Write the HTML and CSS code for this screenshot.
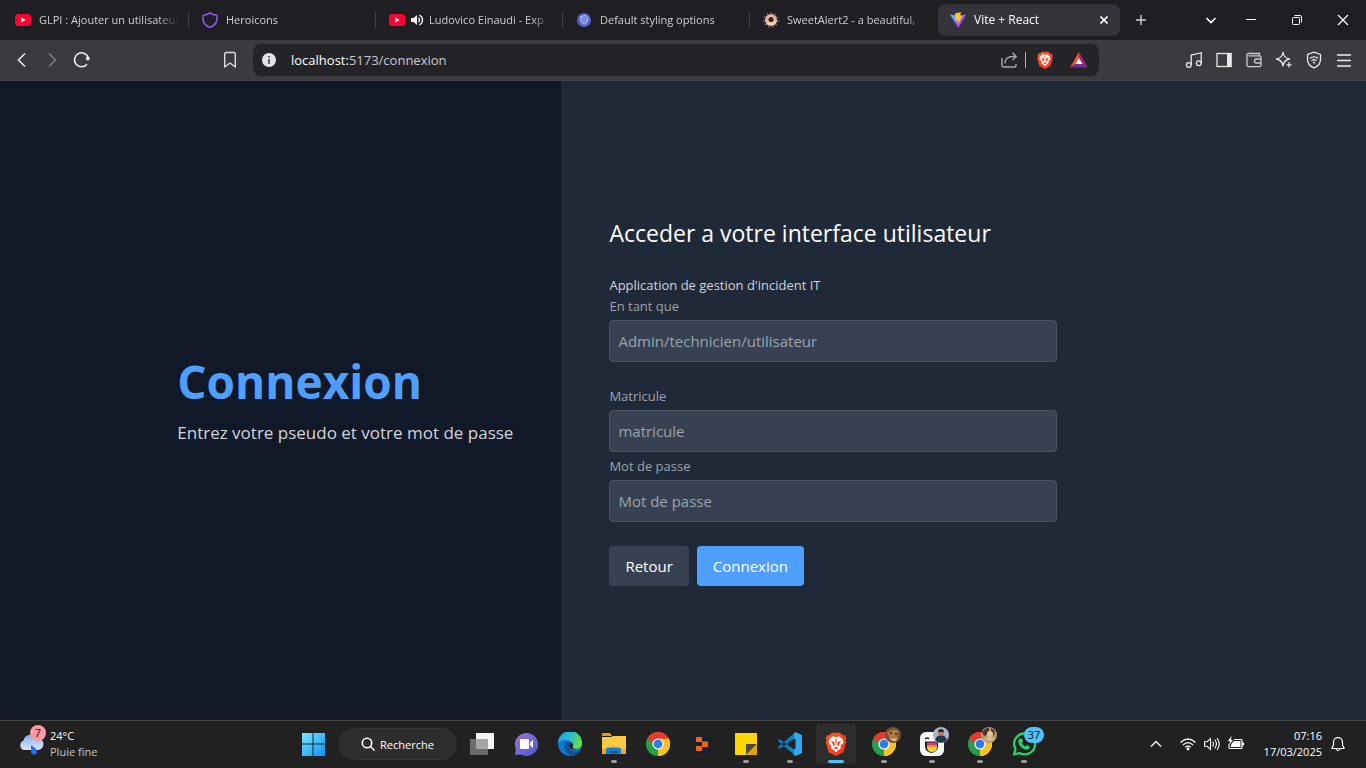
FILE: index.html
```html
<!DOCTYPE html>
<html lang="fr">
<head>
<meta charset="utf-8">
<title>Vite + React</title>
<link rel="stylesheet" href="styles.css">
</head>
<body>
<svg class="defs" width="0" height="0" aria-hidden="true">
  <linearGradient id="g-brave" x1="0" y1="0" x2="1" y2="1"><stop offset="0" stop-color="#ff5a1f"/><stop offset="1" stop-color="#f1331f"/></linearGradient>
  <symbol id="i-youtube" viewBox="0 0 16 16"><rect y="2" width="16" height="12" rx="3" fill="#ff0033"/><path d="M6.3 5.5v5l4.4-2.500z" fill="#fff"/></symbol>
  <symbol id="i-lion" viewBox="0 0 24 28">
    <path d="M7 1h10l2.500 2.800 2.300-.3L24 7l-.9 2.500.8 2.500-3.300 11.500L12 28l-8.600-4.500L.1 12l.8-2.500L0 7l2.200-3.500 2.300.3z" fill="url(#g-brave)"/>
    <path d="M8 5l4 1 4-1 3.500 3.500 1.200 3.700-3.500 4 .6 2.500-2.600 2L12 23.500l-3.200-2.800-2.600-2 .6-2.500-3.500-4 1.200-3.700z" fill="#fff"/>
    <path d="M6 10.500l4 1.100.6 3.700-1.700 1.500-.5-2.600zM18 10.500l-4 1.100-.6 3.700 1.700 1.500.5-2.600zM9 18.500l3-1 3 1-3 2zM11.300 8h1.400l-.2 7h-1z" fill="#f5401f"/>
  </symbol>
  <symbol id="i-chrome" viewBox="0 0 24 24">
    <path d="M12 12L1.600 6A12 12 0 0 1 22.400 6z" fill="#e33b2e"/>
    <path d="M12 12L22.400 6A12 12 0 0 1 12 24z" fill="#fcc31e"/>
    <path d="M12 12v12A12 12 0 0 1 1.600 6z" fill="#269f4b"/>
    <path d="M12 6.500h10.700A12 12 0 0 1 12 24l4.800-9.200z" fill="#fcc31e"/>
    <path d="M7.200 14.800L1.600 6 12 6.500z" fill="#269f4b"/>
    <path d="M1.600 6A12 12 0 0 1 22.700 6.500H12a5.500 5.500 0 0 0-5 3.200L6 12z" fill="#e33b2e"/>
    <circle cx="12" cy="12" r="5.600" fill="#fff"/><circle cx="12" cy="12" r="4.400" fill="#2f7de9"/>
  </symbol>
</svg>

<header class="browser">
  <div class="tabstrip">
    <nav class="tabs" aria-label="Onglets">
      <a class="tab" href="#"><svg class="icon16"><use href="#i-youtube"/></svg><span class="tab-title">GLPI : Ajouter un utilisateur</span></a>
      <a class="tab" href="#"><svg class="icon16" viewBox="0 0 16 16" fill="none" stroke="#8b5cf6" stroke-width="1.500" stroke-linejoin="round"><path d="M8 .9C6 2.600 3.700 3.200 1.300 3.200.1 9 2.400 13.400 8 15.200c5.600-1.800 7.900-6.200 6.700-12C12.300 3.200 10 2.600 8 .9z"/></svg><span class="tab-title">Heroicons</span></a>
      <a class="tab" href="#"><svg class="icon16"><use href="#i-youtube"/></svg><svg class="sound" viewBox="0 0 14 14" fill="none" stroke="#eee" stroke-width="1.400"><path d="M1 5v4h2.500L7 12V2L3.500 5z" fill="#eee" stroke="none"/><path d="M8.500 4.700a3.200 3.200 0 0 1 0 4.600M9.300 2.200a5.200 5.200 0 0 1 0 9.600"/></svg><span class="tab-title">Ludovico Einaudi - Exp</span></a>
      <a class="tab" href="#"><svg class="icon16" viewBox="0 0 16 16"><circle cx="8" cy="8" r="7" fill="#5364cf"/><path d="M4.500 4.500l5-1.300 2.600 2.700-.8 4.200-3 2.200-3.200-2.400z" fill="#7b8be2" stroke="#b9c1f3" stroke-width="1"/></svg><span class="tab-title">Default styling options</span></a>
      <a class="tab" href="#"><svg class="icon16" viewBox="0 0 16 16"><circle cx="8" cy="8" r="7" fill="none" stroke="#675767" stroke-width="1.800" stroke-dasharray="2 2"/><circle cx="8" cy="8" r="6" fill="#e8b69b"/><path d="M3 10a6 6 0 0 0 11-1L9 11z" fill="#f2d5a7"/><circle cx="8" cy="7.500" r="2.500" fill="#29232b"/></svg><span class="tab-title">SweetAlert2 - a beautiful,</span></a>
      <a class="tab tab-active" href="#" aria-current="page"><svg class="icon16" viewBox="0 0 16 16"><defs><linearGradient id="g-vite" x1="0" y1="0" x2="1" y2="1"><stop offset="0" stop-color="#41c8ff"/><stop offset=".7" stop-color="#b13cff"/></linearGradient></defs><path d="M0 2.500l8 1.300 8-1.300L8.300 16z" fill="url(#g-vite)"/><path d="M5.200 1.300L11 .2 10.200 4l2.300-.3L8 12.500l.4-4.200-3.100.5z" fill="#ffc928"/></svg><span class="tab-title">Vite + React</span><svg class="close" viewBox="0 0 8 8" stroke="#fff" stroke-width="1.600"><path d="M.5.5l7 7M7.500.5l-7 7"/></svg></a>
    </nav>
    <button class="newtab" aria-label="Nouvel onglet"><svg class="icon16" viewBox="0 0 16 16" stroke="#d0d0d0" stroke-width="1.400"><path d="M8 3v10M3 8h10"/></svg></button>
    <div class="window-actions">
      <button class="tab-search" aria-label="Rechercher"><svg class="icon16" viewBox="0 0 16 16" fill="none" stroke="#fff" stroke-width="1.700"><path d="M3.500 6L8 10.500 12.500 6"/></svg></button>
      <button aria-label="Réduire"><svg class="icon16" viewBox="0 0 16 16" stroke="#fff"><path d="M3 7.500h10"/></svg></button>
      <button aria-label="Restaurer"><svg class="icon16" viewBox="0 0 16 16" fill="none" stroke="#fff"><rect x="3.500" y="5.500" width="7" height="7" rx="1"/><path d="M5.500 3.500H11A1.500 1.500 0 0 1 12.500 5v5.500"/></svg></button>
      <button aria-label="Fermer"><svg class="icon16" viewBox="0 0 16 16" stroke="#fff" stroke-width="1.200"><path d="M3 3l10 10M13 3L3 13"/></svg></button>
    </div>
  </div>

  <div class="toolbar">
    <button aria-label="Précédent"><svg class="icon20" viewBox="0 0 20 20" fill="none" stroke="#eee" stroke-width="1.500"><path d="M13 3.500L6.500 10l6.500 6.500"/></svg></button>
    <button aria-label="Suivant"><svg class="icon20" viewBox="0 0 20 20" fill="none" stroke="#7d7d82" stroke-width="1.500"><path d="M7 3.500l6.500 6.500L7 16.500"/></svg></button>
    <button aria-label="Actualiser"><svg class="icon20" viewBox="0 0 20 20" fill="none" stroke="#eee" stroke-width="1.600"><path d="M15 14.200A7 7 0 1 1 16.300 8"/><circle cx="15.800" cy="8.500" r="1.900" fill="#eee" stroke="none"/></svg></button>
    <button class="bookmark" aria-label="Favori"><svg class="icon20" viewBox="0 0 20 20" fill="none" stroke="#ddd" stroke-width="1.400" stroke-linejoin="round"><path d="M4.700 4a1.500 1.500 0 0 1 1.500-1.500h7.600A1.500 1.500 0 0 1 15.300 4v13L10 13l-5.300 4z"/></svg></button>
    <div class="address">
      <svg class="icon16" viewBox="0 0 16 16"><circle cx="8" cy="8" r="7" fill="#e4e3e8"/><path d="M8 7v5M8 4v1.800" stroke="#55545a" stroke-width="1.800"/></svg>
      <span class="url"><b>localhost:</b>5173/connexion</span>
      <svg class="icon18" viewBox="0 0 18 18" fill="none" stroke="#aaa" stroke-width="1.400"><path d="M2 7v7.500A1.500 1.500 0 0 0 3.500 16h11a1.500 1.500 0 0 0 1.500-1.500V13M5 12.500c0-4.500 3-7 8-7h3M12.500 1.800L16.200 5.500l-3.700 3.700"/></svg>
      <span class="divider"></span>
      <svg class="icon18 shield"><use href="#i-lion"/></svg>
      <svg class="icon18 bat" viewBox="0 0 18 18"><path d="M9 1L0 16.500l9-6z" fill="#ff5427"/><path d="M9 1l9 15.500-9-6z" fill="#9e2476"/><path d="M0 16.500h18l-9-6z" fill="#6b3195"/><path d="M9 7l3.500 6h-7z" fill="#fff"/></svg>
    </div>
    <div class="extensions">
      <button aria-label="Musique"><svg class="icon18" viewBox="0 0 18 18" fill="none" stroke="#e8e8e8" stroke-width="1.300"><circle cx="3.800" cy="14" r="2.400"/><circle cx="13.800" cy="12.200" r="2.400"/><path d="M6.200 14V4l10-2.300v10.500"/></svg></button>
      <button aria-label="Panneau latéral"><svg class="icon18" viewBox="0 0 18 18" fill="none" stroke="#e8e8e8" stroke-width="1.300"><rect x="2" y="2.500" width="14" height="13"/><path d="M12 2h4.500v14H12z" fill="#e8e8e8" stroke="none"/></svg></button>
      <button aria-label="Portefeuille"><svg class="icon18" viewBox="0 0 18 18" fill="none" stroke="#ccc" stroke-width="1.300"><path d="M2 4v10a1.700 1.700 0 0 0 1.700 1.700h10.600A1.700 1.700 0 0 0 16 14V6.200A1.700 1.700 0 0 0 14.300 4.800H3.500M2 4.500A1.500 1.500 0 0 1 3.500 2.500h11V4.500M16 8h-4.500a2 2 0 0 0 0 4H16"/></svg></button>
      <button aria-label="Leo"><svg class="icon18" viewBox="0 0 18 18" fill="none" stroke="#e8e8e8" stroke-width="1.300" stroke-linejoin="round"><path d="M8 1.500q.8 5.300 6.500 6.500Q8.800 9.300 8 14.800 7.200 9.300 1.500 8 7.200 6.800 8 1.500z"/><path d="M14 11.300v5M11.500 13.800h5"/></svg></button>
      <button aria-label="VPN"><svg class="icon18" viewBox="0 0 18 18" fill="none" stroke="#e8e8e8" stroke-width="1.300"><path d="M9 1.200l6.500 2.300v5C15.500 12.500 12.500 15.500 9 16.800 5.500 15.500 2.500 12.500 2.500 8.500v-5zM4.800 7.300q4.200-3 8.400 0M6.500 9.600q2.500-1.800 5 0"/><circle cx="9" cy="11.600" r="1" fill="#e8e8e8" stroke="none"/></svg></button>
      <button aria-label="Menu"><svg class="icon18" viewBox="0 0 18 18" stroke="#eee" stroke-width="1.300"><path d="M2 4h14M2 9.500h14M2 15h14"/></svg></button>
    </div>
  </div>
</header>

<main class="login">
  <section class="intro">
    <div>
      <h1>Connexion</h1>
      <p>Entrez votre pseudo et votre mot de passe</p>
    </div>
  </section>
  <section class="panel">
    <form class="form">
      <h2>Acceder a votre interface utilisateur</h2>
      <p>Application de gestion d'incident IT</p>
      <div class="field field-role">
        <label for="role">En tant que</label>
        <input id="role" type="text" placeholder="Admin/technicien/utilisateur">
      </div>
      <div class="field">
        <label for="matricule">Matricule</label>
        <input id="matricule" type="text" placeholder="matricule">
      </div>
      <div class="field">
        <label for="password">Mot de passe</label>
        <input id="password" type="password" placeholder="Mot de passe">
      </div>
      <div class="form-actions">
        <button class="btn" type="button">Retour</button>
        <button class="btn btn-primary" type="submit">Connexion</button>
      </div>
    </form>
  </section>
</main>

<footer class="taskbar">
  <div class="weather">
    <div class="weather-icon">
      <svg width="26" height="26" viewBox="0 0 26 26"><defs><linearGradient id="g-cloud" x1="0" y1="0" x2="0" y2="1"><stop offset="0" stop-color="#83aef0"/><stop offset="1" stop-color="#dce5f7"/></linearGradient></defs><path d="M6 19a5 5 0 0 1-.5-9.500A7.500 7.500 0 0 1 19 7a6 6 0 0 1 1 12z" fill="url(#g-cloud)"/><path d="M13 14c2 2 6 3 6 6.500a3 3 0 0 1-6 0z" fill="#1f73e8"/></svg>
      <span class="weather-badge">7</span>
    </div>
    <div class="weather-text"><span>24°C</span><span class="muted">Pluie fine</span></div>
  </div>

  <div class="apps">
    <button class="app" aria-label="Démarrer"><svg class="icon24" viewBox="0 0 24 24"><defs><linearGradient id="g-win" x1="0" y1="0" x2="1" y2="1"><stop offset="0" stop-color="#7be6ff"/><stop offset="1" stop-color="#0d93f8"/></linearGradient></defs><path d="M1 1h10.500v10.500H1zM12.500 1H24v10.500H12.500zM1 12.500h10.500V24H1zM12.500 12.500H24V24H12.500z" fill="url(#g-win)"/></svg></button>
    <button class="search"><svg class="icon16" viewBox="0 0 16 16" fill="none" stroke="#fff" stroke-width="1.600"><circle cx="7" cy="7" r="4.700"/><path d="M10.500 10.500L14.500 14.500"/></svg>Recherche</button>
    <button class="app" aria-label="Vue des tâches"><svg class="icon24" viewBox="0 0 24 24"><path d="M6 1h18v16H6z" fill="#f4f4f4"/><path d="M0 7h18v16H0z" fill="#6b6b6b"/><path d="M6 7h12v10H6z" fill="#a6a6a6"/></svg></button>
    <button class="app" aria-label="Chat"><svg class="icon24" viewBox="0 0 24 24"><defs><linearGradient id="g-chat" x1="0" y1="0" x2="1" y2="1"><stop offset="0" stop-color="#9a79d2"/><stop offset="1" stop-color="#4b55ce"/></linearGradient></defs><path d="M12 1a11.500 11.500 0 1 1-5 21.500L1 23l.8-6A11.500 11.500 0 0 1 12 1z" fill="url(#g-chat)"/><rect x="6" y="7" width="9" height="10" rx="1" fill="#fff"/><path d="M16 10.500l3-2.500v8l-3-2.500z" fill="#fff"/></svg></button>
    <button class="app" aria-label="Edge"><svg class="icon24" viewBox="0 0 24 24"><defs><linearGradient id="g-edge" x1="0" y1="0" x2="1" y2=".4"><stop offset="0" stop-color="#1597de"/><stop offset=".5" stop-color="#25bbd9"/><stop offset="1" stop-color="#68db45"/></linearGradient></defs><circle cx="12" cy="12" r="12" fill="#0c75cc"/><path d="M0 11A12 12 0 0 1 24 11c.4 4-2.700 6-6 6-3 0-4.500-1.500-3.200-3.300C16.500 9 6 5 0 11z" fill="url(#g-edge)"/><path d="M9.500 9.500C4.500 13.500 6.500 22 14 23.800c3.500-.6 6-2.500 7.800-5-4 2-9.500.5-10.500-4-.4-2 .5-3 1-4z" fill="#174f97"/><path d="M14 11c2 1.500 1 3 .5 4 0 1.500 2.500 2.500 5 1.800-4 1.700-8 .2-8.200-2.300-.2-2 1-3.500 2.700-3.500z" fill="#222"/></svg></button>
    <button class="app running" aria-label="Explorateur"><svg class="icon24" viewBox="0 0 24 24"><path d="M0 1h8l2 3H0z" fill="#d99a16"/><path d="M0 5h9l2-1h13v18H0z" fill="#fbc944"/><path d="M0 17h24v5H0z" fill="#eca918"/><path d="M4 22v-4.500A2 2 0 0 1 6 15.500h11a2 2 0 0 1 2 2V22z" fill="#147dd0"/><path d="M8 19h8v2H8z" fill="#075793"/></svg></button>
    <button class="app" aria-label="Chrome"><svg class="icon24"><use href="#i-chrome"/></svg></button>
    <button class="app" aria-label="Terminal"><svg class="icon24" viewBox="0 0 24 24"><path d="M3 4h17v17H3z" fill="#191f30"/><path d="M6 5h6v5H6zM12 9.500h6V15h-6zM6 14h6v5H6z" fill="#f1670e"/></svg></button>
    <button class="app running" aria-label="Pense-bêtes"><svg class="icon24" viewBox="0 0 24 24"><path d="M1 1h22v22H1z" fill="#ffd500"/><path d="M12 12h11L12 23z" fill="#4b4942"/><path d="M23 12v11H12z" fill="#e1a500"/></svg></button>
    <button class="app running" aria-label="Visual Studio Code"><svg class="icon24" viewBox="0 0 24 24"><path d="M1.500 7L17.500 18.500V24L0 9zM1.500 17L17.500 5.500V0L0 15z" fill="#087fc9"/><path d="M17.500 0L24 3v18l-6.500 3-1.500-1.500V1.500z" fill="#31a8ef"/><path d="M17.500 6.500v11L10 12z" fill="#222"/></svg></button>
    <button class="app app-wide running current" aria-label="Brave"><svg class="icon24"><use href="#i-lion"/></svg></button>
    <button class="app app-wide running" aria-label="Chrome, profil 1"><svg class="icon24"><use href="#i-chrome"/></svg><svg class="avatar" viewBox="0 0 16 16"><circle cx="8" cy="8" r="8" fill="#76502f"/><path d="M2 6q6-6 11-2l-1 6q-4 3-7 1z" fill="#b27a43"/><path d="M4 10q4 3 9 0l-2 4H7z" fill="#d5b38e"/><circle cx="6" cy="6" r="1" fill="#2a1a13"/><circle cx="11" cy="7" r="1" fill="#2a1a13"/></svg></button>
    <button class="app app-wide running" aria-label="Messagerie"><svg class="icon24" viewBox="0 0 24 24"><rect width="24" height="24" rx="6" fill="#fff"/><path d="M5 9.500h13V14c0 9-13 9-13 0z" fill="#222"/><path d="M7 10.500h10V14H7z" fill="#d43b7a"/><path d="M7 13h10v2.500H7z" fill="#f58b2e"/><path d="M7 15q0 5 5 5t5-5z" fill="#f7d42c"/><path d="M5 7q2-2 4 0" stroke="#222" stroke-width="1.500" fill="none"/></svg><svg class="avatar" viewBox="0 0 16 16"><circle cx="8" cy="8" r="8" fill="#aeb4ca"/><path d="M2 13q2-5 6-5t6 5q-6 6-12 0z" fill="#203752"/><circle cx="8" cy="6" r="3" fill="#b17961"/><path d="M5 5q0-3 3-3t3 3z" fill="#29232b"/></svg></button>
    <button class="app app-wide running" aria-label="Chrome, profil 2"><svg class="icon24"><use href="#i-chrome"/></svg><svg class="avatar" viewBox="0 0 16 16"><circle cx="8" cy="8" r="8" fill="#b9976f"/><path d="M1 5q5-5 7-4v6L3 9zM10 1l4 3-1 5-3-2z" fill="#49352b"/><circle cx="9" cy="7" r="3" fill="#e4c39f"/><path d="M3 12q6-4 11 0-5 4-11 0z" fill="#d8bd8a"/></svg></button>
    <button class="app app-last running" aria-label="WhatsApp"><svg class="icon24" viewBox="0 0 24 24"><path d="M2 22.500l1.500-5.500A10.500 10.500 0 1 1 7.500 21z" fill="none" stroke="#25d366" stroke-width="2.300" stroke-linejoin="round"/><path d="M8 6.500l2 .1 1 3-1.200 1.600q1.200 2.500 3.600 3.300l1.400-1.500 3 1.500q-.2 3-3 3.200C10.500 17.500 6 13 6.200 9z" fill="#25d366"/></svg><span class="count">37</span></button>
  </div>

  <div class="tray">
    <button aria-label="Icônes masquées"><svg class="icon16" viewBox="0 0 16 16" fill="none" stroke="#eee" stroke-width="1.500"><path d="M3 10.500l5-5 5 5"/></svg></button>
    <button class="status" aria-label="Réseau, volume, batterie">
      <svg class="icon16" viewBox="0 0 16 16" fill="none" stroke="#fff" stroke-width="1.300"><path d="M.5 6.500q7.500-7 15 0M3 9q5-4.800 10 0M5.300 11.300q2.700-2.400 5.400 0"/><circle cx="8" cy="13" r="1.400" fill="#fff" stroke="none"/></svg>
      <svg class="icon16" viewBox="0 0 16 16" fill="none" stroke="#fff" stroke-width="1.100"><path d="M.6 5.800v4.400H3L6.500 13.500v-11L3 5.800zM8.500 5.500q2 2.500 0 5M10.700 3.500q3.500 4.500 0 9M13 2q4.500 6 0 12"/></svg>
      <svg class="icon16" viewBox="0 0 16 16" fill="none" stroke="#fff" stroke-width="1.100"><path d="M6 3.500h7a1 1 0 0 1 1 1v7a1 1 0 0 1-1 1H2a1 1 0 0 1-1-1V8"/><path d="M3.500 7.500L6 5h6.500v6h-10zM14 6.500h2v3h-2zM3.500 0L0 5h2L1 9l4-5H3z" fill="#fff" stroke="none"/></svg>
    </button>
    <div class="clock"><span>07:16</span><span>17/03/2025</span></div>
    <button aria-label="Notifications"><svg class="icon16" viewBox="0 0 16 16" fill="none" stroke="#fff" stroke-width="1.200" stroke-linejoin="round"><path d="M3.500 6.200a4.500 4.500 0 0 1 9 0V9l1.700 3.500H1.800L3.500 9zM6 13q2 3 4 0"/></svg></button>
  </div>
</footer>
</body>
</html>
```
FILE: styles.css
```css
* { box-sizing: border-box; }

body {
  margin: 0;
  min-height: 100vh;
  display: flex;
  flex-direction: column;
  font-family: "Open Sans", "Noto Sans", sans-serif;
  font-size: 15px;
  color: #fff;
  background: #1f2937;
}

h1, h2, p { margin: 0; }
a { color: inherit; text-decoration: none; }
button { font: inherit; color: inherit; border: 0; padding: 0; background: none; }
svg { display: block; flex: none; }

.defs { position: absolute; }
.icon16 { width: 16px; height: 16px; }
.icon18 { width: 18px; height: 18px; }
.icon20 { width: 20px; height: 20px; }
.icon24 { width: 24px; height: 24px; }

/* Tab strip */
.tabstrip {
  display: flex;
  align-items: center;
  height: 40px;
  padding-left: 2px;
  background: #1f1e23;
  font-size: 11px;
}
.tabs { display: flex; align-items: center; min-width: 0; }
.tab {
  display: flex;
  align-items: center;
  gap: 8px;
  flex: 0 1 auto;
  width: 187px;
  min-width: 0;
  height: 16px;
  padding: 0 10px 0 13px;
  border-right: 1px solid #414046;
  color: #cfced3;
}
.tab:nth-last-child(2) { border-color: transparent; }
.tab-title {
  flex: 1;
  min-width: 0;
  overflow: hidden;
  white-space: nowrap;
  line-height: 16px;
  mask-image: linear-gradient(to right, #000 calc(100% - 20px), transparent);
}
.sound { width: 14px; height: 14px; margin: 0 -3px; }
.tab-active {
  width: 182px;
  height: 32px;
  margin-left: 1px;
  padding: 0 12px;
  border: 0;
  border-radius: 8px;
  background: #35343a;
  color: #fff;
  font-size: 12px;
}
.close { width: 8px; height: 8px; }
.newtab { display: grid; place-items: center; width: 42px; height: 40px; }
.window-actions { display: flex; margin-left: auto; }
.window-actions button { display: grid; place-items: center; width: 46px; height: 40px; }
.window-actions .tab-search { width: 34px; }

/* Toolbar */
.toolbar {
  display: flex;
  align-items: center;
  height: 41px;
  padding: 0 7px;
  border-bottom: 1px solid #444349;
  background: #3b3a3f;
}
.toolbar button { display: grid; place-items: center; width: 30px; height: 32px; flex: none; }
.toolbar .bookmark { margin-left: 118px; }
.address {
  flex: 1;
  display: flex;
  align-items: center;
  height: 32px;
  margin-left: 8px;
  padding: 0 11px 0 8px;
  border-radius: 8px;
  background: #242328;
}
.url { flex: 1; margin-left: 14px; font-size: 13px; color: #c9c8ce; }
.url b { font-weight: 400; color: #fff; }
.divider { width: 1px; height: 16px; margin: 0 10px 0 7px; background: #b5b5b8; }
.bat { margin-left: 16px; }
.extensions { display: flex; margin-left: 80px; }

/* Login page */
.login { flex: 1; display: flex; }
.intro {
  flex: 0 0 41.1%;
  display: flex;
  align-items: center;
  justify-content: flex-end;
  padding: 48px;
  background: #111827;
}
.intro h1 { font-size: 46px; line-height: 52px; font-weight: 700; color: #4f9fff; }
.intro p { margin-top: 12px; font-size: 17px; line-height: 28px; color: #d1d5db; }
.panel { flex: 1; display: flex; align-items: center; padding: 48px; background: #1f2937; }
.form { flex: 1; max-width: 448px; }
.form h2 { margin-bottom: 24px; font-size: 23px; line-height: 36px; font-weight: 400; }
.form p { font-size: 13px; line-height: 21px; color: #d1d5db; }
.field { margin-bottom: 4px; }
.field-role { margin-bottom: 24px; }
.field label { display: block; margin-bottom: 4px; font-size: 13px; line-height: 20px; color: #9ca3af; }
.field input {
  display: block;
  width: 100%;
  height: 42px;
  padding: 8px;
  border: 1px solid #4b5563;
  border-radius: 4px;
  background: #374151;
  color: #fff;
  font: inherit;
}
.field input::placeholder { color: #9ca3af; }
.form-actions { display: flex; gap: 8px; margin-top: 24px; }
.btn { height: 40px; padding: 0 16px; border-radius: 4px; background: #374151; }
.btn-primary { background: #4f9fff; }

/* Taskbar */
.taskbar {
  display: grid;
  grid-template-columns: 291fr auto 322fr;
  height: 48px;
  box-shadow: inset 0 1px #45443f;
  background: #212121;
  font-size: 11px;
}
.weather { display: flex; align-items: center; gap: 6px; padding-left: 18px; }
.weather-icon { position: relative; }
.weather-badge {
  position: absolute;
  top: -6px;
  right: -2px;
  width: 16px;
  border-radius: 8px;
  background: #ff99a4;
  color: #111;
  line-height: 16px;
  text-align: center;
}
.weather-text, .clock { display: flex; flex-direction: column; line-height: 16px; }
.muted { color: #c4c4c4; }
.apps { display: flex; align-items: center; }
.app { position: relative; display: grid; place-items: center; width: 44px; height: 40px; }
.app-wide { width: 48px; }
.app-last { width: 40px; }
.running::after {
  content: "";
  position: absolute;
  bottom: 1px;
  left: calc(50% - 3px);
  width: 6px;
  height: 3px;
  border-radius: 2px;
  background: #9a9a9a;
}
.current { width: 40px; margin: 0 4px; border-radius: 4px; background: #2d2d2d; }
.current::after { left: calc(50% - 8px); width: 16px; background: #4cc2ff; }
.avatar { position: absolute; top: 3px; right: 7px; width: 16px; height: 16px; }
.count {
  position: absolute;
  top: 3px;
  right: 0;
  width: 20px;
  border-radius: 8px;
  background: #4cc2ff;
  color: #111;
  line-height: 16px;
  text-align: center;
}
.search {
  display: flex;
  align-items: center;
  gap: 4px;
  width: 118px;
  height: 32px;
  margin: 0 3px 0 4px;
  padding-left: 20px;
  border: 1px solid #353535;
  border-radius: 16px;
  background: #2d2d2d;
}
.tray { display: flex; align-items: center; justify-content: flex-end; gap: 8px; padding-right: 20px; }
.status { display: flex; gap: 8px; margin: 0 8px; }
.clock { align-items: flex-end; min-width: 62px; }
```
